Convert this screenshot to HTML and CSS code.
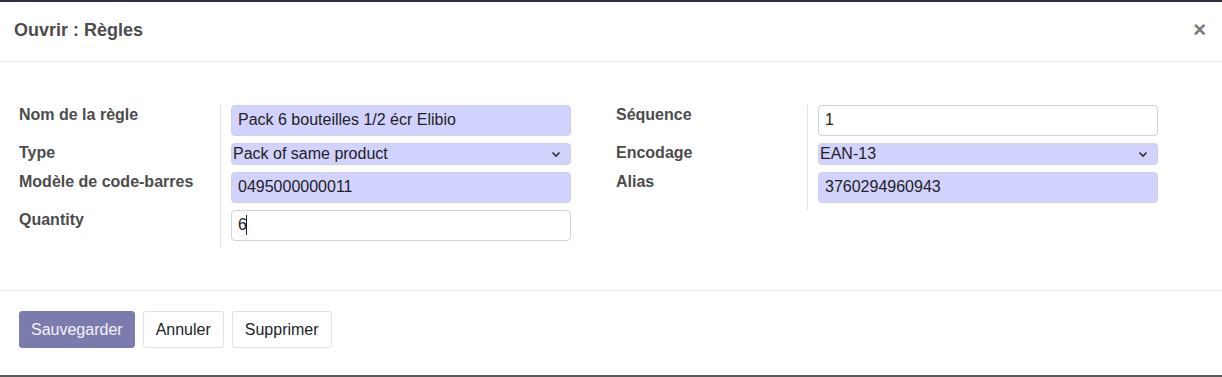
FILE: index.html
```html
<!DOCTYPE html>
<html lang="fr">
<head>
    <meta charset="UTF-8">
    <meta name="viewport" content="width=device-width, initial-scale=1.0">
    <title>Ouvrir : Règles</title>
    <link rel="stylesheet" href="styles.css">
</head>
<body>
    <div class="modal">
        <div class="modal-header">
            <h4 class="modal-title">Ouvrir : Règles</h4>
            <span class="close">&times;</span>
        </div>
        <div class="modal-body">
            <div class="form-groups">
                <div class="group group-left">
                    <label class="field-label" for="name">Nom de la règle</label>
                    <div class="field-cell">
                        <input class="field required" type="text" id="name" value="Pack 6 bouteilles 1/2 écr Elibio">
                    </div>
                    <label class="field-label" for="type">Type</label>
                    <div class="field-cell">
                        <div class="select-wrap">
                            <select class="field-select required" id="type">
                                <option>Pack of same product</option>
                            </select>
                            <svg class="chevron" width="10" height="7" viewBox="0 0 10 7"><path d="M1.5 1.5 L5 5 L8.5 1.5" fill="none" stroke="#333" stroke-width="1.7"/></svg>
                        </div>
                    </div>
                    <label class="field-label" for="pattern">Modèle de code-barres</label>
                    <div class="field-cell">
                        <input class="field required" type="text" id="pattern" value="0495000000011">
                    </div>
                    <label class="field-label" for="qty">Quantity</label>
                    <div class="field-cell">
                        <div class="caret-wrap">
                            <input class="field" type="text" id="qty" value="6">
                            <span class="caret"></span>
                        </div>
                    </div>
                </div>
                <div class="group group-right">
                    <label class="field-label" for="sequence">Séquence</label>
                    <div class="field-cell">
                        <input class="field" type="text" id="sequence" value="1">
                    </div>
                    <label class="field-label" for="encoding">Encodage</label>
                    <div class="field-cell">
                        <div class="select-wrap">
                            <select class="field-select required" id="encoding">
                                <option>EAN-13</option>
                            </select>
                            <svg class="chevron" width="10" height="7" viewBox="0 0 10 7"><path d="M1.5 1.5 L5 5 L8.5 1.5" fill="none" stroke="#333" stroke-width="1.7"/></svg>
                        </div>
                    </div>
                    <label class="field-label" for="alias">Alias</label>
                    <div class="field-cell">
                        <input class="field required" type="text" id="alias" value="3760294960943">
                    </div>
                </div>
            </div>
        </div>
        <div class="modal-footer">
            <button class="btn btn-primary">Sauvegarder</button>
            <button class="btn btn-secondary">Annuler</button>
            <button class="btn btn-secondary">Supprimer</button>
        </div>
    </div>
</body>
</html>
```
FILE: styles.css
```css
body {
    margin: 0;
    font-family: 'Liberation Sans', Arial, sans-serif;
    background-color: #ffffff;
}
.modal {
    border-top: 2px solid #2e2e40;
    border-bottom: 2px solid #5a5a5a;
    background-color: #ffffff;
}
.modal-header {
    display: flex;
    justify-content: space-between;
    align-items: flex-start;
    height: 60px;
    box-sizing: border-box;
    padding: 18px 16px 0 14px;
    border-bottom: 1px solid #e9ecef;
}
.modal-title {
    margin: 0;
    font-size: 18px;
    line-height: 20px;
    font-weight: bold;
    color: #4c4c4c;
}
.close {
    font-size: 22px;
    line-height: 20px;
    font-weight: bold;
    color: #7a7a7a;
}
.modal-body {
    padding: 43px 19px 42px 19px;
}
.form-groups {
    display: grid;
    grid-template-columns: 597px 542px;
    align-items: start;
}
.group {
    display: grid;
    align-items: start;
    align-content: start;
}
.group-left {
    grid-template-columns: 201px 351px;
}
.group-right {
    grid-template-columns: 191px 351px;
}
.field-label {
    font-size: 16px;
    line-height: 18px;
    padding-top: 1px;
    font-weight: bold;
    color: #4c4c4c;
}
.field-cell {
    border-left: 1px solid #dee2e6;
    padding: 0 0 7px 10px;
    align-self: stretch;
}
.field {
    box-sizing: border-box;
    width: 340px;
    height: 31px;
    padding: 0 6px 1px 6px;
    margin: 0;
    font-family: 'Liberation Sans', Arial, sans-serif;
    font-size: 16px;
    color: #222222;
    background-color: #ffffff;
    border: 1px solid #ced4da;
    border-radius: 4px;
    outline: none;
}
.field.required {
    background-color: #d2d2ff;
    border-color: #cfd0e6;
}
.select-wrap, .caret-wrap {
    position: relative;
    width: 340px;
}
.field-select {
    appearance: none;
    -webkit-appearance: none;
    box-sizing: border-box;
    width: 340px;
    height: 22px;
    padding: 0 1px;
    margin: 0;
    display: block;
    font-family: 'Liberation Sans', Arial, sans-serif;
    font-size: 16px;
    line-height: 20px;
    color: #222222;
    border: 1px solid #cfd0e6;
    border-radius: 4px;
    outline: none;
}
.field-select.required {
    background-color: #d2d2ff;
}
.chevron {
    position: absolute;
    right: 10px;
    top: 8px;
}
.caret {
    position: absolute;
    left: 15px;
    top: 5px;
    width: 1px;
    height: 20px;
    background-color: #222222;
}
.modal-footer {
    display: flex;
    gap: 8px;
    padding: 20px 19px 27px 19px;
    border-top: 1px solid #e9ecef;
}
.btn {
    font-family: 'Liberation Sans', Arial, sans-serif;
    font-size: 16px;
    line-height: 21px;
    padding: 7px 12px;
    border-radius: 3px;
    cursor: pointer;
}
.btn-primary {
    padding: 7px 11px;
    background-color: #7c7bad;
    border: 1px solid #7c7bad;
    color: #f3f3fa;
}
.btn-secondary {
    background-color: #ffffff;
    border: 1px solid #dee2e6;
    color: #212529;
}
```
